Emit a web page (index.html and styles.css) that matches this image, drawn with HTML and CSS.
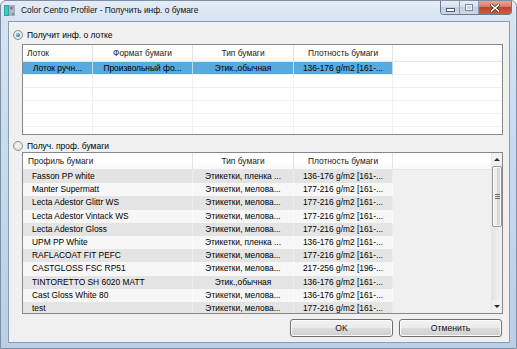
FILE: index.html
```html
<!DOCTYPE html>
<html>
<head>
<meta charset="utf-8">
<title>Color Centro Profiler</title>
<link rel="stylesheet" href="styles.css">
</head>
<body>
<div class="window">
  <div class="titlebar">
    <svg class="app-icon" width="11" height="11" viewBox="0 0 11 11">
      <rect x="0" y="0" width="11" height="11" fill="#9fb3c4"/>
      <rect x="0" y="0" width="5" height="11" fill="#2aa6a6"/>
      <rect x="1" y="1" width="3" height="9" fill="#4cc2c0"/>
      <circle cx="7.5" cy="3" r="1.3" fill="#d9408a"/>
      <circle cx="7.5" cy="6.5" r="1.3" fill="#e6c43a"/>
      <circle cx="9" cy="9" r="1" fill="#3a8fd9"/>
    </svg>
    <span class="title">Color Centro Profiler - Получить инф. о бумаге</span>
    <div class="caption-buttons">
      <div class="cb cb-min"><span class="glyph-min"></span></div>
      <div class="cb cb-max"><span class="glyph-max"></span></div>
      <div class="cb cb-close">
        <svg width="10" height="8" viewBox="0 0 10 8">
          <path d="M1.5 1 L8.5 7 M8.5 1 L1.5 7" stroke="#5a2a25" stroke-width="3" stroke-linecap="square"/>
          <path d="M1.5 1 L8.5 7 M8.5 1 L1.5 7" stroke="#ffffff" stroke-width="1.6" stroke-linecap="square"/>
        </svg>
      </div>
    </div>
  </div>

  <div class="client">
    <div class="radio-row">
      <span class="radio checked"></span>
      <span class="radio-label">Получит инф. о лотке</span>
    </div>

    <div class="list list-top">
      <div class="row header top-cols">
        <div class="cell left-h">Лоток</div>
        <div class="cell">Формат бумаги</div>
        <div class="cell">Тип бумаги</div>
        <div class="cell">Плотность бумаги</div>
        <div class="cell fill"></div>
      </div>
      <div class="row body-row top-cols selected">
        <div class="cell">Лоток ручн...</div>
        <div class="cell">Произвольный фо...</div>
        <div class="cell">Этик.,обычная</div>
        <div class="cell">136-176 g/m2 [161-...</div>
        <div class="cell fill"></div>
      </div>
      <div class="row body-row top-cols grid"><div class="cell"></div><div class="cell"></div><div class="cell"></div><div class="cell"></div><div class="cell fill"></div></div>
      <div class="row body-row top-cols grid"><div class="cell"></div><div class="cell"></div><div class="cell"></div><div class="cell"></div><div class="cell fill"></div></div>
      <div class="row body-row top-cols grid"><div class="cell"></div><div class="cell"></div><div class="cell"></div><div class="cell"></div><div class="cell fill"></div></div>
      <div class="row body-row top-cols grid"><div class="cell"></div><div class="cell"></div><div class="cell"></div><div class="cell"></div><div class="cell fill"></div></div>
      <div class="row body-row top-cols grid"><div class="cell"></div><div class="cell"></div><div class="cell"></div><div class="cell"></div><div class="cell fill"></div></div>
    </div>

    <div class="radio-row second">
      <span class="radio"></span>
      <span class="radio-label">Получ. проф. бумаги</span>
    </div>

    <div class="list list-bottom">
      <div class="table">
        <div class="row header bot-cols">
          <div class="cell left-h">Профиль бумаги</div>
          <div class="cell">Тип бумаги</div>
          <div class="cell">Плотность бумаги</div>
          <div class="cell fill"></div>
        </div>
        <div class="row prow bot-cols odd"><div class="cell name">Fasson PP white</div><div class="cell">Этикетки, пленка ...</div><div class="cell">136-176 g/m2 [161-...</div></div>
        <div class="row prow bot-cols even"><div class="cell name">Manter Supermatt</div><div class="cell">Этикетки, мелова...</div><div class="cell">177-216 g/m2 [161-...</div></div>
        <div class="row prow bot-cols odd"><div class="cell name">Lecta Adestor Glittr WS</div><div class="cell">Этикетки, мелова...</div><div class="cell">177-216 g/m2 [161-...</div></div>
        <div class="row prow bot-cols even"><div class="cell name">Lecta Adestor Vintack WS</div><div class="cell">Этикетки, мелова...</div><div class="cell">177-216 g/m2 [161-...</div></div>
        <div class="row prow bot-cols odd"><div class="cell name">Lecta Adestor Gloss</div><div class="cell">Этикетки, мелова...</div><div class="cell">177-216 g/m2 [161-...</div></div>
        <div class="row prow bot-cols even"><div class="cell name">UPM PP White</div><div class="cell">Этикетки, пленка ...</div><div class="cell">136-176 g/m2 [161-...</div></div>
        <div class="row prow bot-cols odd"><div class="cell name">RAFLACOAT FIT PEFC</div><div class="cell">Этикетки, мелова...</div><div class="cell">177-216 g/m2 [161-...</div></div>
        <div class="row prow bot-cols even"><div class="cell name">CASTGLOSS FSC RP51</div><div class="cell">Этикетки, мелова...</div><div class="cell">217-256 g/m2 [196-...</div></div>
        <div class="row prow bot-cols odd"><div class="cell name">TINTORETTO SH 6020 MATT</div><div class="cell">Этик.,обычная</div><div class="cell">136-176 g/m2 [161-...</div></div>
        <div class="row prow bot-cols even"><div class="cell name">Cast Gloss White 80</div><div class="cell">Этикетки, мелова...</div><div class="cell">136-176 g/m2 [161-...</div></div>
        <div class="row prow bot-cols odd"><div class="cell name">test</div><div class="cell">Этикетки, мелова...</div><div class="cell">177-216 g/m2 [161-...</div></div>
      </div>
      <div class="vscroll">
        <div class="sb-btn"><span class="arrow-up"></span></div>
        <div class="sb-thumb"><span class="grip"></span></div>
        <div class="sb-track"></div>
        <div class="sb-btn"><span class="arrow-down"></span></div>
      </div>
    </div>

    <div class="buttons">
      <div class="btn">OK</div>
      <div class="btn">Отменить</div>
    </div>
  </div>
</div>
</body>
</html>
```

FILE: styles.css
```css
html, body {
  margin: 0;
  padding: 0;
}
body {
  width: 517px;
  height: 349px;
  overflow: hidden;
  background: #ffffff;
  font-family: "Liberation Sans", Arial, sans-serif;
  color: #000;
}
.window {
  width: 517px;
  height: 349px;
  box-sizing: border-box;
  border: 1px solid #7d8ea5;
  border-radius: 6px 6px 0 0;
  background: linear-gradient(to bottom, #e4ecf6 0px, #d6e2f1 20px, #c4d7ed 60%, #b9cee8 100%);
  padding: 0 6px 5px 7px;
  display: flex;
  flex-direction: column;
}

/* title bar */
.titlebar {
  height: 20px;
  margin: 0 -6px 0 -7px;
  display: flex;
  align-items: flex-start;
  flex: none;
}
.app-icon {
  margin: 4px 0 0 3px;
  flex: none;
}
.title {
  margin-left: 6px;
  line-height: 19px;
  font-size: 8.4px;
  color: #111;
  white-space: nowrap;
}
.caption-buttons {
  margin-left: auto;
  margin-right: 4px;
  display: flex;
  height: 13px;
  border: 1px solid #6a7a90;
  border-top: none;
  border-radius: 0 0 4px 4px;
  overflow: hidden;
}
.cb {
  height: 13px;
  display: flex;
  align-items: center;
  justify-content: center;
  box-sizing: border-box;
}
.cb-min, .cb-max {
  width: 19px;
  background: linear-gradient(to bottom, #e7edf5 0%, #d6dfea 50%, #c3cfdd 50%, #ccd8e6 100%);
  border-right: 1px solid #8d9db2;
}
.cb-close {
  width: 32px;
  background: linear-gradient(to bottom, #e8a597 0%, #d77a6a 45%, #c3432f 50%, #cf5a45 100%);
}
.glyph-min {
  width: 7px;
  height: 2px;
  margin-top: 5px;
  background: #fff;
  border: 1px solid #4d5d73;
}
.glyph-max {
  width: 6px;
  height: 5px;
  border: 1px solid #7b8aa0;
  box-shadow: inset 0 0 0 1px #f3f6fa;
  background: #c9d4e2;
}

/* client area */
.client {
  flex: 1;
  box-sizing: border-box;
  border: 1px solid #8a9cb4;
  background: #f0f0f0;
  padding: 0 6px 0 13px;
  display: flex;
  flex-direction: column;
  font-size: 8.4px;
}
.radio-row {
  height: 12px;
  margin: 7px 0 0 -9px;
  display: flex;
  align-items: center;
  gap: 4px;
}
.radio-row.second {
  margin-top: 5px;
}
.radio {
  width: 10px;
  height: 10px;
  box-sizing: border-box;
  border-radius: 50%;
  border: 1px solid #8e8f8f;
  background: radial-gradient(circle at 50% 40%, #fbfbfb 0%, #e6e6e6 60%, #d0d0d0 100%);
  display: flex;
  align-items: center;
  justify-content: center;
}
.radio.checked::after {
  content: "";
  width: 4px;
  height: 4px;
  border-radius: 50%;
  background: radial-gradient(circle at 40% 35%, #9fd5f5 0%, #2f7dbf 60%, #1b4f86 100%);
}
.radio-label {
  font-size: 8.5px;
  line-height: 12px;
}

/* lists */
.list {
  box-sizing: border-box;
  border: 1px solid #828790;
  overflow: hidden;
}
.list-top {
  margin-top: 3px;
  height: 91px;
  background: #ffffff;
}
.list-bottom {
  height: 162px;
  background: #f0f0f0;
  display: flex;
}
.table {
  flex: 1;
  min-width: 0;
  overflow: hidden;
}
.row {
  display: grid;
  align-items: stretch;
}
.top-cols {
  grid-template-columns: 70px 100px 101px 99px 1fr;
}
.bot-cols {
  grid-template-columns: 170px 101px 99px 1fr;
}
.cell {
  white-space: nowrap;
  overflow: hidden;
  text-align: center;
  box-sizing: border-box;
}
.header {
  height: 17px;
  background: linear-gradient(to bottom, #ffffff 0%, #ffffff 60%, #f7f8f9 100%);
  border-bottom: 1px solid #e6e6e6;
  box-sizing: border-box;
  color: #1a1a1a;
}
.header .cell {
  line-height: 16px;
  border-right: 1px solid #e3e3e3;
}
.header .cell.fill {
  border-right: none;
}
.header .left-h {
  text-align: left;
  padding-left: 4px;
}
.list-bottom .header .left-h {
  padding-left: 5px;
}
.body-row {
  height: 13px;
  box-sizing: border-box;
}
.body-row .cell {
  line-height: 12px;
  border-bottom: 1px solid #f0f0f0;
  border-right: 1px solid #f0f0f0;
}
.body-row .cell.fill {
  border-right: none;
}
.selected .cell {
  background: #57aadd;
  border-right: 1px solid #bcdcf1;
  border-bottom: 1px solid #e4f0f9;
}
.selected .cell.fill {
  background: transparent;
  border-bottom: 1px solid #f0f0f0;
}
.prow {
  height: 13.2px;
  box-sizing: border-box;
}
.prow .cell {
  line-height: 13px;
  border-right: 1px solid rgba(255, 255, 255, 0.35);
}
.prow.odd .cell {
  background: #e4e4e4;
}
.prow.even .cell {
  background: #f7f7f7;
}
.prow .cell.name {
  text-align: left;
  padding-left: 9px;
}

/* scrollbar */
.vscroll {
  width: 11px;
  flex: none;
  display: flex;
  flex-direction: column;
  background: linear-gradient(to right, #e2e2e2 0%, #ececec 40%, #f0f0f0 100%);
  border-left: 1px solid #e8e8e8;
  box-sizing: border-box;
}
.sb-btn {
  height: 13px;
  flex: none;
  display: flex;
  align-items: center;
  justify-content: center;
  background: #f0f0f0;
}
.arrow-up {
  width: 0;
  height: 0;
  border-left: 3px solid transparent;
  border-right: 3px solid transparent;
  border-bottom: 3px solid #2b2b2b;
}
.arrow-down {
  width: 0;
  height: 0;
  border-left: 3px solid transparent;
  border-right: 3px solid transparent;
  border-top: 3px solid #2b2b2b;
}
.sb-thumb {
  height: 61px;
  flex: none;
  box-sizing: border-box;
  border: 1px solid #979797;
  border-radius: 2px;
  background: linear-gradient(to right, #f3f3f3 0%, #ebebeb 50%, #d9d9d9 51%, #d6d6d6 100%);
  box-shadow: inset 0 0 0 1px #fafafa;
  display: flex;
  align-items: center;
  justify-content: center;
}
.grip {
  width: 5px;
  height: 5px;
  background: repeating-linear-gradient(to bottom, #6b6b6b 0px, #6b6b6b 1px, transparent 1px, transparent 2px);
}
.sb-track {
  flex: 1;
}

/* buttons */
.buttons {
  margin-top: 5px;
  display: flex;
  justify-content: flex-end;
  gap: 6px;
  margin-right: 1px;
}
.btn {
  width: 103px;
  height: 18px;
  box-sizing: border-box;
  border: 1px solid #707070;
  border-radius: 3px;
  background: linear-gradient(to bottom, #f2f2f2 0%, #ebebeb 50%, #dddddd 50%, #cfcfcf 100%);
  box-shadow: inset 0 0 0 1px #fbfbfb;
  text-align: center;
  line-height: 16px;
  font-size: 8.6px;
  color: #111;
}
```
